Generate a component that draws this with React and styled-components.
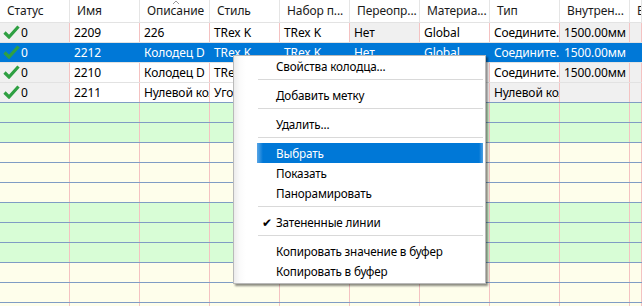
import React from "react";
import styled, { createGlobalStyle } from "styled-components";

const Global = createGlobalStyle`
  html, body { margin: 0; padding: 0; background: #fff; overflow: hidden; }
  body { font-family: "Noto Sans", "Open Sans", sans-serif; font-size: 12px; color: #000; }
`;

const Page = styled.div`
  position: relative;
  width: 642px;
  height: 306px;
  overflow: hidden;
  background: #fff;
`;

const COLS = "repeat(9, 70px) 1fr";

const HeaderRow = styled.div`
  display: grid;
  grid-template-columns: ${COLS};
  height: 23px;
  border-bottom: 1px solid #e3e3e3;
  box-sizing: border-box;
  background: #fff;
`;

const HeaderCell = styled.div`
  position: relative;
  display: flex;
  align-items: center;
  padding-left: 7px;
  padding-bottom: 2px;
  border-right: 1px solid #e5e5e5;
  box-sizing: border-box;
  white-space: nowrap;
  overflow: hidden;
  color: #1a1a1a;
  letter-spacing: -0.1px;
`;

const SortGlyph = styled.svg`
  position: absolute;
  top: 0;
  left: 32px;
`;

const Row = styled.div`
  display: grid;
  grid-template-columns: ${COLS};
  height: 20px;
  box-sizing: border-box;
  border-bottom: 1px solid ${(p) => p.$line};
  background: ${(p) => p.$bg};
  color: ${(p) => (p.$selected ? "#fff" : "#000")};
`;

const Cell = styled.div`
  display: flex;
  align-items: center;
  gap: 1px;
  padding-left: ${(p) => (p.$status ? "3px" : "4px")};
  box-sizing: border-box;
  border-right: 1px solid ${(p) => (p.$selected ? "#0078d7" : "#f4c2c2")};
  background: ${(p) => (p.$selected ? "#0078d7" : p.$gray ? "#f0f0f0" : "transparent")};
  white-space: nowrap;
  overflow: hidden;
  padding-bottom: 1px;
  letter-spacing: -0.1px;
`;

const Menu = styled.div`
  position: absolute;
  left: 233px;
  top: 55px;
  width: 253px;
  box-sizing: border-box;
  padding: 0 0 2px 0;
  border: 1px solid #b9b9b9;
  background: linear-gradient(to right, #ececec 0px, #fbfbfb 6px, #fff 12px);
  box-shadow: 2px 2px 2px rgba(0, 0, 0, 0.45);
  font-size: 11.7px;
  letter-spacing: -0.15px;
`;

const Item = styled.div`
  position: relative;
  height: 20px;
  display: flex;
  align-items: center;
  margin: 0 2px 0 23px;
  padding-left: 19px;
  padding-bottom: 1px;
  box-sizing: border-box;
  color: ${(p) => (p.$active ? "#fff" : "#000")};
  background: ${(p) =>
    p.$active
      ? "linear-gradient(to right, #5aa6e6 0px, #0078d7 6px, #0078d7 calc(100% - 4px), #4d9fe2 100%)"
      : "transparent"};
  white-space: nowrap;
`;

const Check = styled.span`
  position: absolute;
  left: 5px;
  top: 2px;
  font-size: 12px;
`;

const Sep = styled.div`
  height: 9px;
  margin: 0 2px 0 24px;
  display: flex;
  align-items: flex-start;
  padding-top: 3px;
  box-sizing: border-box;
  &::after {
    content: "";
    flex: 1;
    height: 1px;
    background: #d9d9d9;
  }
`;

const headers = ["Статус", "Имя", "Описание", "Стиль", "Набор п...", "Переопр...", "Материа...", "Тип", "Внутрен...", "В"];

const CheckIcon = () => (
  <svg width="17" height="14" viewBox="0 0 17 14">
    <path d="M1.5 7.5 L6 12 L15.5 1.5" fill="none" stroke="#2fa043" strokeWidth="3.2" strokeLinejoin="miter" />
  </svg>
);

const dataRows = [
  { sel: false, cells: ["2209", "226", "TRex K", "TRex K", "Нет", "Global", "Соедините.", "1500.00мм", ""], grayTip: false },
  { sel: true, cells: ["2212", "Колодец D", "TRex K", "TRex K", "Нет", "Global", "Соедините.", "1500.00мм", ""], grayTip: false },
  { sel: false, cells: ["2210", "Колодец D", "TRex K", "TRex K", "Нет", "Global", "Соедините.", "1500.00мм", ""], grayTip: false },
  { sel: false, cells: ["2211", "Нулевой колодец", "Угол", "Угол", "Нет", "Global", "Нулевой колодец", "", ""], grayTip: true },
];

const grayCols = [4, 7, 8];

const menuItems = [
  { t: "Свойства колодца..." },
  { sep: true },
  { t: "Добавить метку" },
  { sep: true },
  { t: "Удалить..." },
  { sep: true },
  { t: "Выбрать", active: true },
  { t: "Показать" },
  { t: "Панорамировать" },
  { sep: true },
  { t: "Затененные линии", check: true },
  { sep: true },
  { t: "Копировать значение в буфер" },
  { t: "Копировать в буфер" },
];

export default function App() {
  const empty = [];
  for (let i = 4; i < 20; i++) {
    const band = Math.floor(i / 3) % 2;
    empty.push(band === 1 ? "#d8fdd6" : "#fefeeb");
  }
  return (
    <Page>
      <Global />
      <HeaderRow>
        {headers.map((h, i) => (
          <HeaderCell key={i}>
            {h}
            {i === 2 && (
              <SortGlyph width="8" height="5" viewBox="0 0 8 5">
                <path d="M1 4 L4 1 L7 4" fill="none" stroke="#9a9a9a" strokeWidth="1" />
              </SortGlyph>
            )}
          </HeaderCell>
        ))}
      </HeaderRow>
      {dataRows.map((r, ri) => (
        <Row key={ri} $bg="#fff" $line={ri === 3 ? "#7f9cc4" : "#e2e2e2"} $selected={r.sel}>
          <Cell $status $gray $selected={r.sel}>
            <CheckIcon />
            <span>0</span>
          </Cell>
          {r.cells.map((c, ci) => (
            <Cell
              key={ci}
              $selected={r.sel}
              $gray={grayCols.includes(ci) || (ci === 6 && r.grayTip)}
            >
              {c}
            </Cell>
          ))}
        </Row>
      ))}
      {empty.map((bg, i) => (
        <Row key={"e" + i} $bg={bg} $line="#7f9cc4">
          {Array.from({ length: 10 }).map((_, ci) => (
            <Cell key={ci} />
          ))}
        </Row>
      ))}
      <Menu>
        {menuItems.map((m, i) =>
          m.sep ? (
            <Sep key={i} />
          ) : (
            <Item key={i} $active={m.active}>
              {m.check && <Check>✔</Check>}
              {m.t}
            </Item>
          )
        )}
      </Menu>
    </Page>
  );
}
